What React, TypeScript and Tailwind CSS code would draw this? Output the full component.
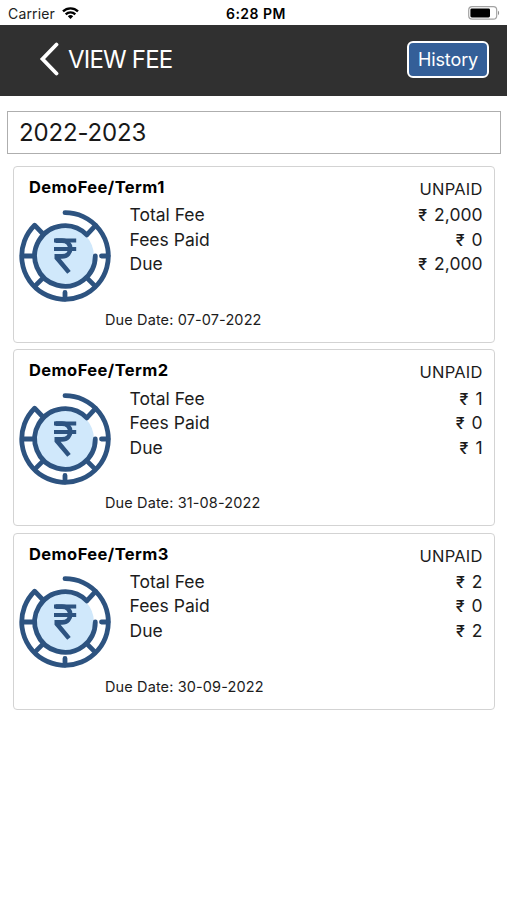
interface Fee {
  term: string;
  status: string;
  total: string;
  paid: string;
  due: string;
  dueDate: string;
}

const FEES: Fee[] = [
  { term: 'DemoFee/Term1', status: 'UNPAID', total: '2,000', paid: '0', due: '2,000', dueDate: '07-07-2022' },
  { term: 'DemoFee/Term2', status: 'UNPAID', total: '1', paid: '0', due: '1', dueDate: '31-08-2022' },
  { term: 'DemoFee/Term3', status: 'UNPAID', total: '2', paid: '0', due: '2', dueDate: '30-09-2022' },
];

function WifiIcon() {
  return (
    <svg viewBox="0 0 17 12" className="-mt-px h-3 w-[17px]" fill="none" stroke="#000" strokeWidth={2.3}>
      <path d="M1 4.4a10.6 10.6 0 0 1 15 0M3.7 7.4a6.8 6.8 0 0 1 9.6 0" />
      <path d="M8.5 12 5.8 9.3a3.8 3.8 0 0 1 5.4 0z" fill="#000" stroke="none" />
    </svg>
  );
}

function BatteryIcon() {
  return (
    <svg viewBox="0 0 32 14" className="-mt-0.5 h-3.5 w-8" fill="none">
      <rect x="0.7" y="0.7" width="28" height="12.4" rx="3.4" stroke="#a3a3a3" strokeWidth={1.2} />
      <rect x="2.4" y="2.4" width="19.6" height="9" rx="1.4" fill="#000" />
      <path d="M30 4.8v4.4c1.5-.6 1.5-3.8 0-4.4z" fill="#8f8f8f" />
    </svg>
  );
}

// Rupee coin inside a segmented, open-ended ring.
function CoinIcon() {
  return (
    <svg viewBox="0 0 92 92" className="size-[92px] shrink-0" fill="none" stroke="#2d5380" strokeWidth={4.8}>
      <circle cx="46" cy="46" r="29" fill="#d0e8fb" stroke="none" />
      <g strokeLinecap="round" strokeLinejoin="round">
        <path d="M46 2.7A43.3 43.3 0 1 1 15.6 15.2L24.5 24.5" />
        <path d="M76.3 46A30.3 30.3 0 1 1 67.8 24.9L76.6 15.4" />
      </g>
      <path d="M2.7 46h13M24.6 67.4l-9.2 9.2M67.4 67.4l9.2 9.2" />
      <path d="M46 89v-6.5M89 46h-6.5" strokeLinecap="round" />
      <path d="M35 30.6h22.2M35 38.9h22.2" strokeWidth={4} />
      <path d="M36.5 30.6h6.5c11 0 11 15.8 0 15.8h-5.2v1.4L50 62.4" strokeWidth={4.6} />
    </svg>
  );
}

function Amount({ label, value }: { label: string; value: string }) {
  return (
    <div className="flex h-[24.5px] items-center justify-between text-[17.5px]">
      <span>{label}</span>
      <span className="flex gap-[7px]">
        <span className="text-base/[26px] font-medium">₹</span>
        {value}
      </span>
    </div>
  );
}

function FeeCard({ fee }: { fee: Fee }) {
  return (
    <article className="h-[177px] rounded-[4px] border border-[#d3d3d3] pt-2 pr-[11.5px] pl-[5px]">
      <div className="flex h-7 justify-between pl-2.5">
        <h2 className="text-[16.5px] leading-6 font-bold tracking-[0.43px] text-black">{fee.term}</h2>
        <span className="pt-0.5 text-[16.5px] leading-6 tracking-[0.2px]">{fee.status}</span>
      </div>
      <div className="flex h-[107px] gap-[18.5px]">
        <div className="pt-[6.6px]">
          <CoinIcon />
        </div>
        <div className="flex-1">
          <Amount label="Total Fee" value={fee.total} />
          <Amount label="Fees Paid" value={fee.paid} />
          <Amount label="Due" value={fee.due} />
        </div>
      </div>
      <p className="pl-[86px] text-[14.5px] leading-5 tracking-[0.12px]">Due Date: {fee.dueDate}</p>
    </article>
  );
}

export default function App() {
  return (
    <main className="h-[900px] w-[507px] overflow-hidden bg-white font-[Inter,'Liberation_Sans',sans-serif] text-[#1c1c1c]">
      <div className="grid h-[25px] grid-cols-3 items-center pt-0.5 pr-[7px] pl-2 text-sm text-[#222]">
        <div className="flex items-center gap-[7px]">
          <span className="tracking-[0.15px]">Carrier</span>
          <WifiIcon />
        </div>
        <span className="pl-1 text-center font-semibold tracking-[0.5px] text-black">6:28 PM</span>
        <div className="flex justify-end">
          <BatteryIcon />
        </div>
      </div>

      <header className="flex h-[71px] items-center justify-between bg-[#303030] pr-[18px] pb-0.5 pl-[39px] text-white">
        <div className="flex items-center gap-[9px]">
          <svg viewBox="0 0 20 34" className="-mt-px h-[34px] w-5" fill="none" stroke="#fff" strokeWidth={3.8}>
            <path d="M17.5 2.5 3.5 17l14 14.5" strokeLinecap="round" />
          </svg>
          <h1 className="text-2xl tracking-[-0.8px]">VIEW FEE</h1>
        </div>
        <button className="h-[37px] w-[82px] rounded-[6px] border-2 border-white bg-[#345f98] text-[18px] tracking-[-0.1px]">
          History
        </button>
      </header>

      <div className="mr-1.5 ml-[7px] mt-[15px] flex h-[43px] items-center border border-[#aeaeae] pl-[11px] text-2xl tracking-[-0.15px] text-[#181818]">
        2022-2023
      </div>

      <section className="mt-3 mr-3 ml-[13px] flex flex-col gap-[6.4px]">
        {FEES.map((fee) => (
          <FeeCard key={fee.term} fee={fee} />
        ))}
      </section>
    </main>
  );
}
